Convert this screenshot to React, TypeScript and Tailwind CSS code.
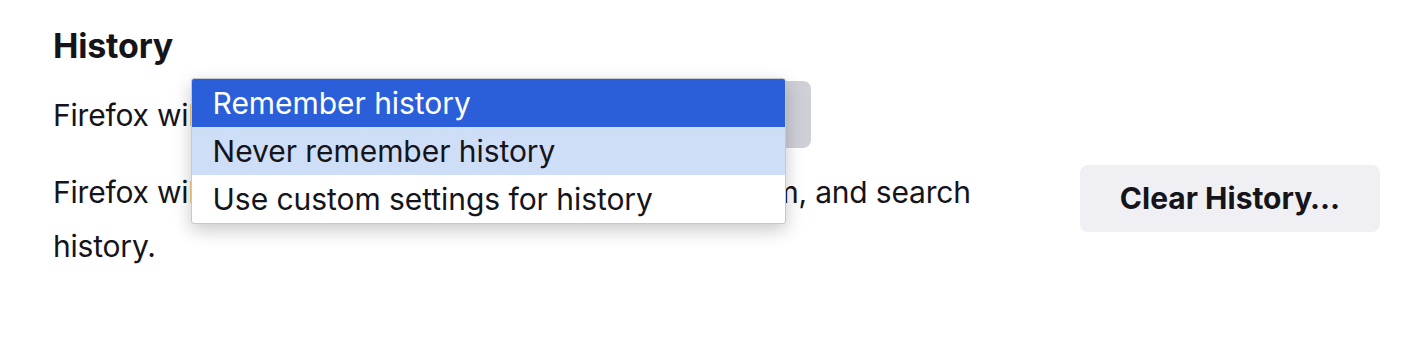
export default function App() {
  return (
    <div className="w-[1418px] h-[354px] bg-white text-[#15141a] font-['Inter','Noto_Sans',sans-serif] pl-[53px] pr-[38px] pt-[24px]">
      <h1 className="text-[34px] leading-[44px] font-bold tracking-[-0.2px]">History</h1>
      <div className="mt-[13px] flex items-center h-[67px]">
        <span className="text-[30px] leading-[40px] tracking-[-0.2px]">Firefox will</span>
        <div className="relative ml-[12px]">
          <div className="w-[596px] h-[67px] rounded-[8px] bg-[#cfcfd8]" />
          <div className="absolute left-[-24px] top-[-3px] w-[595px] bg-white border border-[#c8c8c8] rounded-[3px] shadow-[0_6px_18px_rgba(0,0,0,0.22)] overflow-hidden text-[30px] tracking-[-0.05px]">
            <div className="h-[48px] bg-[#2b5fd9] text-white pl-[21px] flex items-center">Remember history</div>
            <div className="h-[48px] bg-[#cfdef7] pl-[21px] flex items-center">Never remember history</div>
            <div className="h-[48px] pl-[21px] flex items-center">Use custom settings for history</div>
          </div>
        </div>
      </div>
      <div className="mt-[17px] flex items-start gap-[32px]">
        <p className="flex-1 text-[30px] leading-[54px] tracking-[-0.2px]">
          Firefox will remember your browsing, download, form, and search history.
        </p>
        <button className="w-[300px] h-[67px] rounded-[8px] bg-[#f0f0f4] text-[30px] font-bold">
          Clear History…
        </button>
      </div>
    </div>
  );
}
